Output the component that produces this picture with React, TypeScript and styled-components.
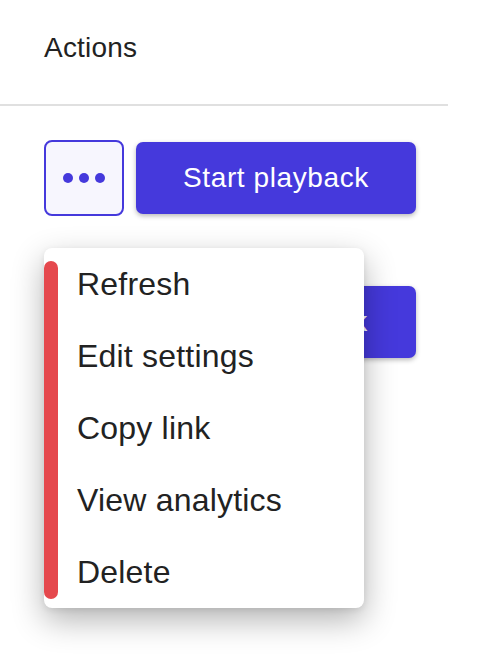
import styled, { createGlobalStyle } from "styled-components";

const GlobalStyle = createGlobalStyle`
  body {
    margin: 0;
    background: #ffffff;
    font-family: "Liberation Sans", Arial, sans-serif;
    color: #222222;
  }
`;

const Page = styled.div`
  width: 448px;
  height: 662px;
  position: relative;
`;

const Header = styled.div`
  padding: 32px 44px 40px;
  font-size: 28px;
  line-height: 32px;
  letter-spacing: 0.2px;
  border-bottom: 2px solid #e0e0e0;
`;

const Content = styled.div`
  padding: 34px 0 0 44px;
  display: grid;
  grid-template-columns: 80px 280px;
  column-gap: 12px;
  row-gap: 70px;
  align-items: center;
`;

const MenuAnchor = styled.div`
  position: relative;
`;

const DotsButton = styled.button`
  box-sizing: border-box;
  width: 80px;
  height: 76px;
  border: 2px solid #4539dc;
  border-radius: 8px;
  background: #f7f6fe;
  display: flex;
  align-items: center;
  justify-content: center;
  gap: 6px;
  padding: 0;
  cursor: pointer;
`;

const Dot = styled.span`
  width: 10px;
  height: 10px;
  border-radius: 50%;
  background: #4539dc;
`;

const PrimaryButton = styled.button<{ $column?: number }>`
  grid-column: ${(p) => p.$column ?? "auto"};
  height: 72px;
  border: none;
  border-radius: 7px;
  background: #4539dc;
  color: #ffffff;
  font-family: "Liberation Sans", Arial, sans-serif;
  font-size: 28px;
  letter-spacing: 0.6px;
  box-shadow: 0 2px 5px rgba(0, 0, 0, 0.28);
  cursor: pointer;
`;

const Menu = styled.ul`
  position: absolute;
  top: 108px;
  left: 0;
  width: 320px;
  margin: 0;
  padding: 0;
  list-style: none;
  background: #ffffff;
  border-radius: 8px;
  box-shadow: 0 12px 32px rgba(0, 0, 0, 0.3), 0 2px 6px rgba(0, 0, 0, 0.08);
  overflow: hidden;
  z-index: 10;
`;

const Accent = styled.span`
  position: absolute;
  left: 0;
  top: 13px;
  bottom: 9px;
  width: 14px;
  border-radius: 7px;
  background: #e5484d;
`;

const MenuItem = styled.li`
  height: 72px;
  display: flex;
  align-items: center;
  padding-left: 33px;
  font-size: 32px;
  letter-spacing: 0.2px;
  color: #222222;
  cursor: pointer;
`;

const items = ["Refresh", "Edit settings", "Copy link", "View analytics", "Delete"];

export default function App() {
  return (
    <Page>
      <GlobalStyle />
      <Header>Actions</Header>
      <Content>
        <MenuAnchor>
          <DotsButton aria-label="More actions">
            <Dot />
            <Dot />
            <Dot />
          </DotsButton>
          <Menu>
            <Accent />
            {items.map((item) => (
              <MenuItem key={item}>{item}</MenuItem>
            ))}
          </Menu>
        </MenuAnchor>
        <PrimaryButton>Start playback</PrimaryButton>
        <PrimaryButton $column={2}>Stop playback</PrimaryButton>
      </Content>
    </Page>
  );
}
